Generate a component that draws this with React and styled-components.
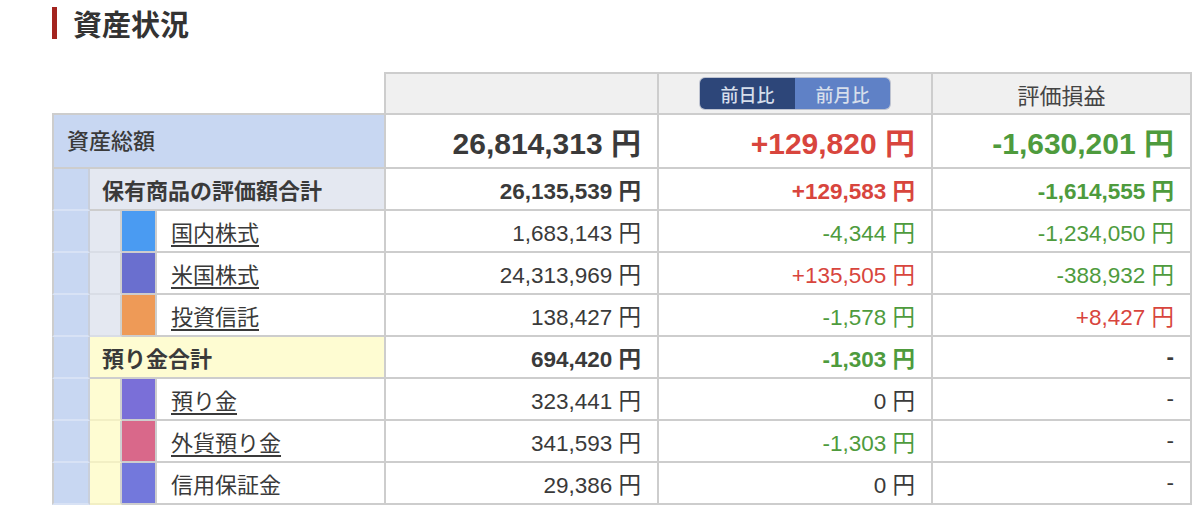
import React from 'react';
import styled, { createGlobalStyle } from 'styled-components';

const GlobalStyle = createGlobalStyle`
  html, body {
    margin: 0;
    padding: 0;
    background: #ffffff;
  }
  body {
    font-family: "Liberation Sans", "Noto Sans CJK JP", sans-serif;
    color: #333333;
  }
`;

const COLS = '38px 32px 35px 229px 273px 274px 259px';
const LINE = '#cdcdcd';
const BLUE = '#c8d7f2';
const GREYBLUE = '#e4e8f1';
const YELLOW = '#fefcd2';
const RED = '#d8453d';
const GREEN = '#4e9b3d';

const Page = styled.div`
  padding: 7px 0 0 52px;
`;

const Title = styled.h2`
  margin: 0;
  height: 32px;
  border-left: 5px solid #a3241f;
  padding-left: 16px;
  font-family: "Noto Sans CJK JP", sans-serif;
  font-size: 29px;
  font-weight: 700;
  line-height: 32px;
  color: #333;
`;

const Table = styled.div`
  margin-top: 33px;
  display: flex;
  flex-direction: column;
`;

const Row = styled.div`
  display: grid;
  grid-template-columns: ${COLS};
  height: ${(p) => p.$h}px;
`;

const Spacer = styled.div`
  grid-column: span 4;
  border-right: 2px solid ${LINE};
  border-bottom: 2px solid ${LINE};
`;

const HeadCell = styled.div`
  box-sizing: border-box;
  background: #f0f0f0;
  border-top: 2px solid ${LINE};
  border-right: 2px solid ${LINE};
  border-bottom: 2px solid ${LINE};
  display: flex;
  align-items: center;
  justify-content: center;
  font-family: "Noto Sans CJK JP", sans-serif;
  font-size: 22px;
  color: #444;
`;

const Toggle = styled.div`
  display: flex;
  height: 31px;
  border-radius: 5px;
  overflow: hidden;
  box-shadow: 0 0 0 1px rgba(40, 60, 110, 0.25);
`;

const ToggleItem = styled.div`
  width: 95px;
  display: flex;
  align-items: center;
  justify-content: center;
  background: ${(p) => (p.$active ? '#2d4679' : '#5f81c6')};
  color: #d6deeb;
  font-family: "Noto Sans CJK JP", sans-serif;
  font-size: 18px;
  font-weight: 500;
`;

const TotalLabel = styled.div`
  grid-column: span 4;
  box-sizing: border-box;
  background: ${BLUE};
  border-left: 2px solid ${LINE};
  border-right: 2px solid ${LINE};
  border-bottom: 2px solid ${LINE};
  padding: 9px 0 0 13px;
  font-family: "Noto Sans CJK JP", sans-serif;
  font-size: 22px;
  font-weight: 500;
  line-height: 30px;
  color: #3a3a3a;
`;

const Strip = styled.div`
  box-sizing: border-box;
  background: ${BLUE};
  border-left: 2px solid ${LINE};
  border-right: 2px solid #c9cfdb;
  border-bottom: 2px solid #d8e2f5;
`;

const GroupLabel = styled.div`
  grid-column: span 3;
  box-sizing: border-box;
  background: ${(p) => p.$bg};
  border-right: 2px solid ${LINE};
  border-bottom: 2px solid ${LINE};
  display: flex;
  align-items: center;
  padding-left: 12px;
  font-family: "Noto Sans CJK JP", sans-serif;
  font-size: 22px;
  font-weight: 700;
  color: #3a3a3a;
`;

const Indent = styled.div`
  box-sizing: border-box;
  background: ${(p) => p.$bg};
  border-right: 2px solid #cfcfcf;
  border-bottom: 2px solid ${(p) => p.$edge};
`;

const Swatch = styled.div`
  box-sizing: border-box;
  background: ${(p) => p.$color};
  border-right: 2px solid ${LINE};
  border-bottom: 2px solid ${LINE};
`;

const ItemLabel = styled.div`
  box-sizing: border-box;
  background: #fff;
  border-right: 2px solid ${LINE};
  border-bottom: 2px solid ${LINE};
  display: flex;
  align-items: center;
  padding-left: 14px;
  font-family: "Noto Sans CJK JP", sans-serif;
  font-size: 22px;
  color: #3a3a3a;
`;

const ItemLink = styled.a`
  color: #3a3a3a;
  text-decoration: underline;
  text-decoration-thickness: 1.5px;
  text-underline-offset: 4px;
`;

const Amount = styled.div`
  box-sizing: border-box;
  background: #fff;
  border-right: 2px solid ${LINE};
  border-bottom: 2px solid ${LINE};
  display: flex;
  align-items: center;
  justify-content: flex-end;
  padding-right: 16px;
  font-size: ${(p) => p.$size || 22.5}px;
  font-weight: ${(p) => (p.$bold ? 700 : 400)};
  color: ${(p) => p.$color || '#3a3a3a'};
  white-space: nowrap;
`;

const tone = (v) => {
  if (v.startsWith('+')) return RED;
  if (v.startsWith('-') && v !== '-') return GREEN;
  return '#3a3a3a';
};

const groups = [
  {
    label: '保有商品の評価額合計',
    bg: GREYBLUE,
    edge: '#d9dde6',
    values: ['26,135,539 円', '+129,583 円', '-1,614,555 円'],
    items: [
      { name: '国内株式', color: '#4a9bf2', link: true, values: ['1,683,143 円', '-4,344 円', '-1,234,050 円'] },
      { name: '米国株式', color: '#6a6fcf', link: true, values: ['24,313,969 円', '+135,505 円', '-388,932 円'] },
      { name: '投資信託', color: '#ee9a57', link: true, values: ['138,427 円', '-1,578 円', '+8,427 円'] },
    ],
  },
  {
    label: '預り金合計',
    bg: YELLOW,
    edge: '#f2efc4',
    values: ['694,420 円', '-1,303 円', '-'],
    items: [
      { name: '預り金', color: '#7a6fd8', link: true, values: ['323,441 円', '0 円', '-'] },
      { name: '外貨預り金', color: '#d9688a', link: true, values: ['341,593 円', '-1,303 円', '-'] },
      { name: '信用保証金', color: '#7378dc', link: false, values: ['29,386 円', '0 円', '-'] },
    ],
  },
];

const App = () => {
  return (
    <>
      <GlobalStyle />
      <Page>
        <Title>資産状況</Title>
        <Table>
          <Row $h={43}>
            <Spacer />
            <HeadCell />
            <HeadCell>
              <Toggle>
                <ToggleItem $active>前日比</ToggleItem>
                <ToggleItem>前月比</ToggleItem>
              </Toggle>
            </HeadCell>
            <HeadCell>評価損益</HeadCell>
          </Row>
          <Row $h={54}>
            <TotalLabel>資産総額</TotalLabel>
            <Amount $size={30} $bold>26,814,313 円</Amount>
            <Amount $size={30} $bold $color={RED}>+129,820 円</Amount>
            <Amount $size={30} $bold $color={GREEN}>-1,630,201 円</Amount>
          </Row>
          {groups.map((g) => (
            <React.Fragment key={g.label}>
              <Row $h={42}>
                <Strip />
                <GroupLabel $bg={g.bg}>{g.label}</GroupLabel>
                {g.values.map((v, i) => (
                  <Amount key={i} $bold $color={tone(v)}>{v}</Amount>
                ))}
              </Row>
              {g.items.map((it) => (
                <Row $h={42} key={it.name}>
                  <Strip />
                  <Indent $bg={g.bg} $edge={g.edge} />
                  <Swatch $color={it.color} />
                  <ItemLabel>
                    {it.link ? <ItemLink href="#">{it.name}</ItemLink> : it.name}
                  </ItemLabel>
                  {it.values.map((v, i) => (
                    <Amount key={i} $color={tone(v)}>{v}</Amount>
                  ))}
                </Row>
              ))}
            </React.Fragment>
          ))}
        </Table>
      </Page>
    </>
  );
};

export default App;
